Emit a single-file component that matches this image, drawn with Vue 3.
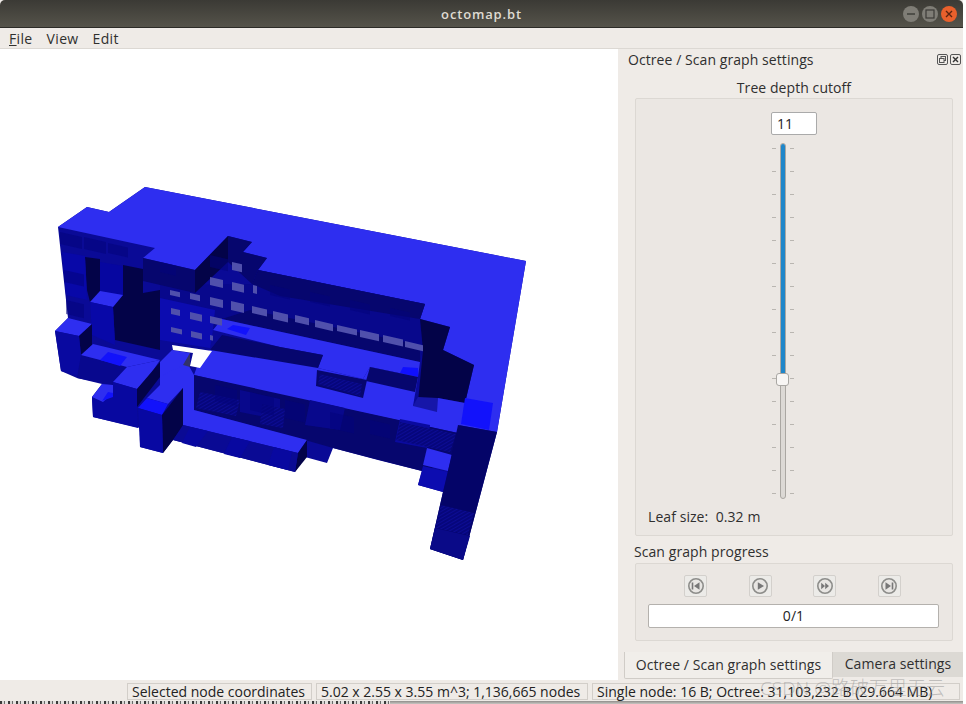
<script setup>
const win = (x, y, w, h) => {
  const s = 0.23 * w
  return `${x},${y} ${x + w},${y + s} ${x + w},${y + s + h} ${x},${y + h}`
}

const LIGHT = '#2e2ef0'
const FRONT = '#0a0a96'
const DARK = '#06066e'
const DEEP = '#030348'
const BRIGHT = '#1212fb'
const MID = '#0c0cb0'
const HATCH = 'url(#hatch)'

// 下層先畫,上層後畫
const shapes = [
  // silhouette
  { f: FRONT, p: '58,227 87,207 109,212 145,187 526,261 497,432 463,560 430,549 443,492 418,485 422,471 378,460 333,448 327,463 305,457 295,472 173,440 163,453 140,447 140,428 93,417 92,397 102,384 77,378 61,371 55,331 68,318' },
  // top plateau
  { f: LIGHT, p: '58,227 87,207 109,212 145,187 526,261 497,432 458,425 465,403 474,365 443,350 450,327 420,319 425,304 258,270 267,258 243,252 252,242 228,236 195,270 143,258 155,248' },
  // upper recess
  { f: '#08088c', p: '160,285 252,284 258,270 425,304 420,319 423,350 420,362 222,319 213,330 160,340' },
  { f: DARK, p: '258,270 425,304 420,319 280,296 252,284' },
  { f: DARK, p: '250,310 420,345 420,362 222,319' },
  { f: DEEP, p: '420,319 450,327 443,350 474,365 465,403 438,398 418,402 423,350' },
  { f: DEEP, p: '195,270 228,236 228,262 195,293' },
  { f: DARK, p: '228,236 252,242 243,252 267,258 258,270 252,284 228,262' },
  // dark interior on the left
  { f: DEEP, p: '85,257 100,259 100,300 90,302 87,290' },
  { f: DEEP, p: '123,265 143,269 143,293 160,290 160,350 115,340 113,307 123,295' },
  { f: DARK, p: '143,258 195,270 195,293 143,281' },
  { f: '#0606a0', p: '100,262 123,266 123,295 100,291' },
  { f: '#0808a8', p: '62,252 85,256 87,300 66,295' },
  { f: MID, p: '160,298 215,310 213,330 210,348 160,340' },
  // middle shelf
  { f: LIGHT, p: '213,330 222,319 420,362 418,377 370,367 363,379 318,368 323,355 280,347' },
  { f: BRIGHT, p: '227,329 233,325 250,328 246,335' },
  { f: '#1010ff', p: '403,367 418,368 418,377 400,373' },
  { f: DARK, p: '222,335 280,347 323,355 318,368 240,365 210,350' },
  // shelf below
  { f: LIGHT, p: '210,350 318,368 363,379 370,367 418,377 413,406 438,398 465,403 458,433 280,395 194,375 200,358' },
  { f: BRIGHT, p: '465,398 493,403 489,430 461,424' },
  { f: DARK, p: '317,370 367,380 363,398 316,386' },
  { f: DARK, p: '370,367 418,377 415,392 366,381' },
  { f: '#1616a8', p: '418,397 438,398 437,412 413,406' },
  { f: HATCH, p: '320,374 362,384 360,396 318,384' },
  // lower recess
  { f: DARK, p: '194,375 458,433 450,462 422,471 333,448 305,440 194,410' },
  { f: '#0a0a9e', p: '400,419 430,425 427,448 395,442' },
  { f: '#08088c', p: '310,400 345,408 340,430 305,425' },
  { f: '#08088c', p: '240,390 280,399 280,420 240,412' },
  { f: HATCH, p: '200,392 240,400 236,416 196,408' },
  { f: HATCH, p: '262,404 285,409 283,428 260,424' },
  { f: HATCH, p: '400,422 456,434 450,452 396,440' },
  { f: LIGHT, p: '194,410 307,440 298,453 183,425 183,388 160,377 160,362 172,350 190,353 189,366 194,375' },
  { f: LIGHT, p: '427,448 452,455 448,471 423,465' },
  { f: MID, p: '423,466 448,472 443,492 418,485' },
  // right column
  { f: '#040468', p: '458,425 497,432 463,560 430,549 443,492 450,462' },
  { f: HATCH, p: '441,505 474,513 468,535 435,528' },
  { f: '#0a0a88', p: '435,528 470,536 463,560 430,549' },
  // hole
  { f: '#ffffff', p: '172,345 212,351 200,368 190,366 193,353 173,350' },
  { f: '#32326a', p: '183,365 190,353 190,367' },
  // lower-left cubes
  { f: LIGHT, p: '90,302 100,291 123,295 113,307' },
  { f: '#0808a8', p: '90,302 113,307 115,345 92,335' },
  { f: LIGHT, p: '55,331 68,318 92,324 79,336' },
  { f: DEEP, p: '79,336 92,324 92,345 81,355' },
  { f: '#0909a0', p: '55,331 79,336 81,355 81,377 61,371' },
  { f: '#08088e', p: '81,355 127,367 113,382 113,385 77,378' },
  { f: LIGHT, p: '81,355 93,344 160,360 127,367' },
  { f: BRIGHT, p: '100,360 108,352 127,357 120,366' },
  { f: LIGHT, p: '113,382 127,367 160,360 150,375 137,389' },
  { f: DEEP, p: '137,389 160,362 160,377 137,407' },
  { f: '#0808a0', p: '113,382 137,389 137,407 138,428 93,417 92,397 102,402 113,393' },
  { f: LIGHT, p: '92,397 102,384 113,385 113,393 103,402' },
  { f: BRIGHT, p: '102,401 108,392 113,393 113,397' },
  { f: LIGHT, p: '160,377 183,365 183,388 168,404 147,398 160,385' },
  { f: BRIGHT, p: '138,408 147,398 168,404 162,415' },
  { f: DEEP, p: '162,415 183,388 183,427 163,453' },
  { f: '#0808a2', p: '138,408 162,415 163,453 140,447' },
  { f: DEEP, p: '307,440 307,457 295,472 298,453' },
  // 前面的三角明暗
  { f: '#0a0a94', p: '183,425 298,453 295,472 173,440' },
  { f: '#0808a0', p: '190,427 208,431 196,447 182,443' },
  { f: '#0808a0', p: '232,437 250,441 240,458 224,454' },
  { f: '#0808a0', p: '274,447 292,452 288,470 268,465' }
]

const windows = [
  [232, 262, 10, 8], [210, 277, 13, 8], [232, 282, 12, 8], [253, 285, 4, 8],
  [170, 290, 10, 5], [190, 293, 10, 6], [210, 297, 13, 8], [231, 301, 13, 9],
  [252, 306, 15, 7], [273, 311, 15, 8], [295, 315, 14, 7], [315, 320, 18, 7],
  [337, 325, 20, 6], [360, 330, 19, 7], [383, 335, 20, 7], [405, 341, 18, 6],
  [171, 308, 9, 6], [190, 312, 12, 7], [210, 316, 12, 7],
  [171, 327, 11, 5], [191, 331, 11, 6], [210, 335, 3, 5]
].map((w) => win(...w))

// 細小方塊的明暗
const blocks = [
  [60, 232, 22, 12], [84, 237, 22, 12], [108, 243, 20, 10], [64, 270, 20, 12], [66, 300, 18, 14],
  [160, 262, 16, 10], [210, 255, 18, 12], [270, 285, 20, 10], [310, 292, 20, 10], [350, 300, 20, 10], [390, 308, 20, 8],
  [215, 385, 22, 16], [250, 392, 24, 18], [285, 400, 20, 18], [330, 412, 24, 16], [370, 420, 20, 14]
]
const tickRows = Array.from({ length: 16 }, (_, i) => i)
</script>

<template>
  <div class="window">
    <header class="titlebar">
      <span class="title">octomap.bt</span>
      <div class="winbtns">
        <span class="wbtn">
          <svg width="10" height="10" viewBox="0 0 10 10"><path d="M1 5h8" stroke="#3c3b37" stroke-width="1.4" /></svg>
        </span>
        <span class="wbtn">
          <svg width="10" height="10" viewBox="0 0 10 10"><rect x="1" y="1" width="8" height="8" fill="none" stroke="#3c3b37" stroke-width="1.2" /></svg>
        </span>
        <span class="wbtn close">
          <svg width="10" height="10" viewBox="0 0 10 10"><path d="M2 2l6 6M8 2l-6 6" stroke="#5b2410" stroke-width="1.4" /></svg>
        </span>
      </div>
    </header>

    <nav class="menubar">
      <span><u>F</u>ile</span>
      <span>View</span>
      <span>Edit</span>
    </nav>

    <main class="body">
      <div class="viewport">
        <svg class="scene" viewBox="0 49 618 631" width="618" height="631">
          <defs>
            <pattern id="hatch" width="5" height="3" patternUnits="userSpaceOnUse" patternTransform="rotate(-30)">
              <rect width="5" height="3" fill="#06067c" />
              <rect width="5" height="1" fill="#0c0c94" />
            </pattern>
          </defs>
          <polygon v-for="(s, i) in shapes" :key="i" :points="s.p" :fill="s.f" />
          <polygon v-for="(b, i) in blocks" :key="'b' + i" :points="win(b[0], b[1], b[2], b[3])" fill="#04047c" opacity="0.55" />
          <polygon v-for="(w, i) in windows" :key="'w' + i" :points="w" fill="#5050ac" />
        </svg>
      </div>

      <aside class="dock">
        <div class="dock-head">
          <span>Octree / Scan graph settings</span>
          <div class="dock-btns">
            <svg width="11" height="11" viewBox="0 0 11 11"><rect x=".5" y=".5" width="10" height="10" rx="1.5" fill="none" stroke="#555" /><rect x="4" y="2.5" width="4.5" height="4" fill="none" stroke="#555" /><rect x="2.5" y="4.5" width="4.5" height="4" fill="#efebe7" stroke="#555" /></svg>
            <svg width="11" height="11" viewBox="0 0 11 11"><rect x=".5" y=".5" width="10" height="10" rx="1.5" fill="none" stroke="#555" /><path d="M3 3l5 5M8 3l-5 5" stroke="#333" stroke-width="1.4" /></svg>
          </div>
        </div>

        <div class="depth-label">Tree depth cutoff</div>
        <section class="group depth-group">
          <div class="spin">11</div>
          <div class="slider">
            <div class="ticks">
              <div v-for="t in tickRows" :key="t" class="tick-row"><i></i><i></i></div>
            </div>
            <div class="groove"><div class="groove-fill"></div></div>
            <div class="handle"></div>
          </div>
          <div class="leaf">Leaf size:&nbsp; 0.32 m</div>
        </section>

        <div class="progress-label">Scan graph progress</div>
        <section class="group progress-group">
          <div class="player">
            <button class="pbtn">
              <svg width="18" height="18" viewBox="0 0 18 18"><circle cx="9" cy="9" r="7.2" fill="#e8e6e3" stroke="#8d8d8a" stroke-width="1.6" /><path d="M5.5 5.5v7" stroke="#777" stroke-width="1.6" /><path d="M12.5 5.2v7.6L7 9z" fill="#777" /></svg>
            </button>
            <button class="pbtn">
              <svg width="18" height="18" viewBox="0 0 18 18"><circle cx="9" cy="9" r="7.2" fill="#e8e6e3" stroke="#8d8d8a" stroke-width="1.6" /><path d="M6.8 5.2v7.6L13 9z" fill="#777" /></svg>
            </button>
            <button class="pbtn">
              <svg width="18" height="18" viewBox="0 0 18 18"><circle cx="9" cy="9" r="7.2" fill="#e8e6e3" stroke="#8d8d8a" stroke-width="1.6" /><path d="M5.2 5.8v6.4L9 9zM9.2 5.8v6.4L13 9z" fill="#777" /></svg>
            </button>
            <button class="pbtn">
              <svg width="18" height="18" viewBox="0 0 18 18"><circle cx="9" cy="9" r="7.2" fill="#e8e6e3" stroke="#8d8d8a" stroke-width="1.6" /><path d="M5.5 5.2v7.6L11 9z" fill="#777" /><path d="M12.5 5.5v7" stroke="#777" stroke-width="1.6" /></svg>
            </button>
          </div>
          <div class="progress">0/1</div>
        </section>

        <div class="tabs">
          <div class="tab active">Octree / Scan graph settings</div>
          <div class="tab">Camera settings</div>
        </div>
      </aside>
    </main>

    <footer class="statusbar">
      <span class="cell c1">Selected node coordinates</span>
      <span class="cell c2">5.02 x 2.55 x 3.55 m^3; 1,136,665 nodes</span>
      <span class="cell c3">Single node: 16 B; Octree: 31,103,232 B (29.664 MB)</span>
    </footer>
    <div class="cutoff"><div class="cutoff-text"></div></div>
    <div class="watermark">CSDN @路破万里无云</div>
  </div>
</template>

<style scoped>
.window {
  position: relative;
  width: 963px;
  height: 704px;
  display: flex;
  flex-direction: column;
  overflow: hidden;
  font-family: "Open Sans", "Noto Sans", "Noto Sans CJK SC", sans-serif;
  font-size: 14px;
  letter-spacing: 0.07px;
  color: #2f2f2f;
  background: #efebe7;
}

.titlebar {
  position: relative;
  flex: 0 0 28px;
  display: flex;
  align-items: center;
  justify-content: center;
  background: linear-gradient(#3b3a35, #55534a);
  border-bottom: 1px solid #2c2b27;
  box-sizing: border-box;
  border-radius: 5px 5px 0 0;
}

.title {
  font-size: 13px;
  font-weight: 600;
  letter-spacing: 0.85px;
  color: #dfdbd2;
}

.winbtns {
  position: absolute;
  right: 6px;
  top: 6px;
  display: flex;
  gap: 3px;
}

.wbtn {
  width: 16px;
  height: 16px;
  border-radius: 50%;
  background: #7f7d76;
  display: flex;
  align-items: center;
  justify-content: center;
}

.wbtn.close {
  background: #e9602c;
}

.menubar {
  flex: 0 0 21px;
  display: flex;
  gap: 14px;
  padding-left: 9px;
  align-items: center;
  border-bottom: 1px solid #dcd8d3;
  box-sizing: border-box;
  letter-spacing: 0.35px;
  color: #30302e;
}

.body {
  flex: 0 0 631px;
  display: flex;
}

.viewport {
  flex: 0 0 618px;
  background: #fff;
}

.scene {
  display: block;
}

.dock {
  flex: 1;
  display: flex;
  flex-direction: column;
  padding: 0 0 0 2px;
  box-sizing: border-box;
}

.dock-head {
  display: flex;
  align-items: center;
  justify-content: space-between;
  height: 20px;
  padding: 0 2px 0 8px;
}

.dock-btns {
  display: flex;
  gap: 2px;
}

.depth-label {
  text-align: center;
  margin-top: 9px;
  height: 20px;
  line-height: 20px;
  margin-left: 15px;
  width: 318px;
}

.group {
  margin-left: 15px;
  width: 318px;
  box-sizing: border-box;
  border: 1px solid #dcd8d3;
  border-radius: 2px;
  background: #ebe7e3;
}

.depth-group {
  height: 438px;
  display: flex;
  flex-direction: column;
  align-items: center;
}

.spin {
  margin-top: 13px;
  width: 46px;
  height: 23px;
  box-sizing: border-box;
  padding-left: 5px;
  line-height: 21px;
  background: #fff;
  border: 1px solid #aaa;
  border-radius: 2px;
  color: #222;
}

.slider {
  position: relative;
  margin-top: 8px;
  margin-right: 22px;
  width: 22px;
  height: 356px;
}

.ticks {
  position: absolute;
  inset: 5px 0 0 0;
  height: 346px;
  display: flex;
  flex-direction: column;
  justify-content: space-between;
}

.tick-row {
  display: flex;
  justify-content: space-between;
  height: 1px;
}

.tick-row i {
  width: 4px;
  height: 1px;
  background: #b9b6b1;
}

.groove {
  position: absolute;
  left: 8px;
  top: 0;
  bottom: 0;
  width: 6px;
  box-sizing: border-box;
  border: 1px solid #aaa7a2;
  border-radius: 3px;
  background: #dcd9d5;
  overflow: hidden;
}

.groove-fill {
  height: 236px;
  background: #1f86c9;
}

.handle {
  position: absolute;
  left: 4px;
  top: 230px;
  width: 13px;
  height: 13px;
  box-sizing: border-box;
  background: #f8f6f4;
  border: 1px solid #a9a7a3;
  border-radius: 3px;
}

.leaf {
  align-self: flex-start;
  margin: 8px 0 0 12px;
  line-height: 20px;
}

.progress-label {
  margin: 6px 0 0 14px;
  height: 20px;
  line-height: 20px;
}

.progress-group {
  margin-top: 1px;
  height: 78px;
  padding: 11px 13px 0 12px;
}

.player {
  display: flex;
  justify-content: space-between;
  padding: 0 38px 0 36px;
}

.pbtn {
  width: 23px;
  height: 22px;
  padding: 0;
  display: flex;
  align-items: center;
  justify-content: center;
  background: #ecebe8;
  border: 1px solid #d3d0cc;
  border-radius: 2px;
}

.progress {
  margin-top: 7px;
  height: 24px;
  line-height: 22px;
  box-sizing: border-box;
  background: #fff;
  border: 1px solid #b4b1ad;
  border-radius: 2px;
  text-align: center;
  color: #222;
}

.tabs {
  display: flex;
  margin: 11px 0 0 4px;
  height: 28px;
}

.tab {
  padding: 0 10px;
  height: 25px;
  line-height: 24px;
  background: #dcd9d4;
  flex: 1;
  text-align: center;
}

.tab.active {
  flex: 0 0 209px;
  box-sizing: border-box;
  height: 27px;
  line-height: 25px;
  background: #f1eeea;
  border: 1px solid #d0ccc7;
  border-top: none;
  border-radius: 0 0 2px 2px;
}

.statusbar {
  flex: 0 0 21px;
  display: flex;
  gap: 4px;
  padding: 3px 0 0 127px;
  align-items: flex-start;
  box-sizing: border-box;
  background: #efebe7;
}

.cell {
  box-sizing: border-box;
  height: 17px;
  line-height: 15px;
  padding-left: 4px;
  border: 1px solid #d2cec9;
  white-space: nowrap;
  letter-spacing: 0;
  color: #222;
}

.c1 { width: 185px; }
.c2 { width: 272px; }
.c3 { width: 368px; }

.cutoff {
  flex: 0 0 3px;
  background: linear-gradient(#8f8d8a, #c9c6c2);
}

.cutoff-text {
  width: 390px;
  height: 3px;
  background: repeating-linear-gradient(90deg, #3a3a3a 0 2px, #d8d6d3 2px 4px, #6a6a6a 4px 5px, #e4e2df 5px 8px);
}

.watermark {
  position: absolute;
  left: 760px;
  top: 673px;
  font-size: 19px;
  font-weight: 300;
  letter-spacing: 0;
  color: rgba(150, 150, 150, 0.55);
  white-space: nowrap;
}
</style>

<style>
html, body {
  background: #ffffff;
}
</style>
